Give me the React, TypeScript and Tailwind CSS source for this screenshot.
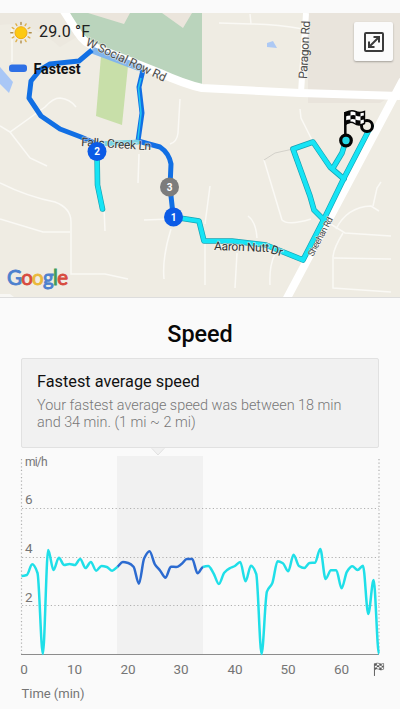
import React from 'react';

const X0 = 21.5;
const STEP = 5.335;
const SPEED_Y = [
  576, 575, 564.3, 573, 654, 550, 570, 557.7, 565, 564, 565, 559, 568, 562, 570.7, 566, 567, 570.7, 566.7,
  562, 563, 566.7, 583.7, 558.3, 551.3, 564.3, 570.7, 577.7, 566.7, 567, 564, 559, 559, 573.3, 567, 566,
  573.3, 584, 572.7, 568.3, 566, 562, 581.3, 565.7, 574, 654, 591.7, 583.3, 561.3, 563.3, 571.3, 554.7,
  566, 568, 563, 562.7, 549, 579, 570.3, 570.3, 588.3, 571.7, 566.3, 570, 565.7, 614, 580, 654,
];

function tangent(i: number): number {
  if (i === 0 || i === SPEED_Y.length - 1) return 0;
  const a = SPEED_Y[i] - SPEED_Y[i - 1];
  const b = SPEED_Y[i + 1] - SPEED_Y[i];
  if (a * b <= 0) return 0;
  return (2 * a * b) / (a + b);
}

function curve(from: number, to: number): string {
  let d = `M${X0 + from * STEP} ${SPEED_Y[from]}`;
  for (let i = from; i < to; i++) {
    const x = X0 + i * STEP;
    d += `C${x + STEP / 3} ${SPEED_Y[i] + tangent(i) / 3} ${x + (STEP * 2) / 3} ${SPEED_Y[i + 1] - tangent(i + 1) / 3} ${x + STEP} ${SPEED_Y[i + 1]}`;
  }
  return d;
}

const CYAN_ROUTES = [
  'M97 152L97.5 185L102.500 209',
  'M173 217L199 221L204 241L232 241L266 245L303 260L324 219L344 178L371 126',
  'M324 220L314 210L310 196L293 149L313 142L330 167L344 179',
  'M333 168L342 153L346 140',
];

const MINOR_ROADS = [
  'M12 27L12 62M0 126L10 132L45 107Q53 98 60 98Q70 99 76 107M10 132L30 158L47 166M0 183Q28 197 55 202Q71 208 71 222L71 274L105 274L128 279',
  'M0 219L43 232L70 232M104 207L105 231M139 154L138 183M144 220L170 219M171 229Q162 258 164 279M180 99L178 133Q177 142 170 144',
  'M250 14L251 24L219 23M251 24Q277 24 303 29M300 109L301 118L312 140M264 160L282 220Q288 226 311 219',
  'M210 186L205 224M248 216Q256 222 257 238M205 242L205 285M237 253L235 288M275 254Q269 266 270 285',
  'M324 220L345 233L391 236M336 229Q347 207 371 206L379 211M373 206L377 188L381 182M343 233Q333 249 333 258L333 288L391 292M334 258L391 259',
];

function Flag() {
  return (
    <g>
      <path d="M2 2Q8 -1 12 1T21 1V13Q15 16 11 13T2 14Z" fill="#fff" stroke="#050505" strokeWidth="1.4" />
      <path
        d="M2 2Q5 .5 7 .5V5Q4 5 2 6ZM12 1Q14 2.500 17 2V6Q14 6 12 5ZM7 5Q10 4 12 5V9Q9 8 7 9ZM17 6Q19 5 21 5V9Q19 9 17 10ZM2 10Q4 9 7 9V12.500Q4 13 2 14ZM12 9Q14 10 17 10V14Q14 15 12 13.500Z"
        fill="#050505"
      />
    </g>
  );
}

function Marker({ x, y, label, color }: { x: number; y: number; label: string; color: string }) {
  return (
    <g>
      <circle cx={x} cy={y} r="9.500" fill={color} />
      <text x={x} y={y + 3.500} textAnchor="middle" fontSize="10" fontWeight="700" fill="#fff">
        {label}
      </text>
    </g>
  );
}

function RouteMap() {
  return (
    <svg viewBox="0 13 400 284" className="block h-[284px] w-full" style={{ fontFamily: 'Roboto, sans-serif' }}>
      <rect y="13" width="400" height="284" fill="#efece3" />
      <path d="M0 13H60L80 35L60 47Q30 20 0 25Z" fill="#ece8df" />
      <path d="M308 13H400V90L380 103L308 103Z" fill="#e9e4dc" />
      <path d="M70 13H202V88L190 86L140 65L84 42Z" fill="#bad4bc" />
      <path d="M88 13L124 24L130 13ZM162 13L183 28L192 13Z" fill="#ebe5dc" />
      <path d="M101 56L128 66L122 125L96 116Z" fill="#c8dfa9" />
      <path d="M0 67L13 82L9 93L0 84Z" fill="#a9c7f6" />
      <path d="M267 43L273 41L277 48L267 47Z" fill="#adc9f4" />
      <g fill="none" stroke="#faf9f5" strokeWidth="1.5">
        {MINOR_ROADS.map((d) => (
          <path key={d} d={d} />
        ))}
      </g>
      <path d="M264 160L275 153L293 149" fill="none" stroke="#cbc9c3" strokeWidth=".8" />
      <g fill="none" stroke="#fff">
        <path d="M62 8L78 33Q84 43 97 48L160 73Q184 84 202 88L300 93L400 96" strokeWidth="8" />
        <path d="M306 13L301 93" strokeWidth="6" />
        <path d="M403 80L344 191L286 300" strokeWidth="8" />
      </g>
      <g fill="none" stroke="#16a3b4" strokeWidth="5.6" strokeLinejoin="round" strokeLinecap="round">
        {CYAN_ROUTES.map((d) => (
          <path key={d} d={d} />
        ))}
      </g>
      <g fill="none" stroke="#16e4f5" strokeWidth="4.2" strokeLinejoin="round" strokeLinecap="round">
        {CYAN_ROUTES.map((d) => (
          <path key={d} d={d} />
        ))}
      </g>
      <path d="M92 50L143 69" stroke="#82b5ec" strokeWidth="7" />
      <path
        d="M143 70L139 87L142 113L138 141M97 144L81 137L60 129L41 116L29 98L31 81L40 70L50 64L79 61L92 50M138 141L160 147Q169 153 171 164L170 187L173 214"
        fill="none"
        stroke="#116fe4"
        strokeWidth="5"
        strokeLinejoin="round"
      />
      <path d="M141 78L138.500 88L141 113L138 139" fill="none" stroke="#22c6ef" strokeWidth="1.600" />
      <path d="M97 144L139 142" stroke="#75d3e4" strokeWidth="5" />
      <g fill="#4b4b4b" stroke="#f5f3ec" strokeWidth="1.5" paintOrder="stroke" strokeOpacity=".6">
        <text transform="translate(85 45) rotate(25)" fontSize="12" textLength="87">
          W Social Row Rd
        </text>
        <text transform="translate(307 79) rotate(-87)" fontSize="12" textLength="58">
          Paragon Rd
        </text>
        <text transform="translate(81 146) rotate(3.5)" fontSize="12" textLength="70" fill="#383838">
          Falls Creek Ln
        </text>
        <text transform="translate(214 250) rotate(2)" fontSize="12" textLength="55" fill="#333">
          Aaron Nutt
        </text>
        <text transform="translate(270 253) rotate(17)" fontSize="12" fill="#333">
          Dr
        </text>
        <text transform="translate(313 257) rotate(-62)" fontSize="9" textLength="43">
          Sheehan Rd
        </text>
      </g>
      <Marker x={97} y={151.500} label="2" color="#0c5be6" />
      <Marker x={169.500} y={187} label="3" color="#7c7c7c" />
      <Marker x={173.500} y={217} label="1" color="#0c5be6" />
      <circle cx="367" cy="126" r="5.500" fill="#efece3" stroke="#050505" strokeWidth="3" />
      <path d="M345.300 112V136" stroke="#050505" strokeWidth="2.500" />
      <g transform="translate(343.500 110.500)">
        <Flag />
      </g>
      <circle cx="346" cy="140.500" r="5.300" fill="#23d6e4" stroke="#050505" strokeWidth="3.200" />
      <g strokeWidth="1.4" strokeLinecap="round">
        {[0, 30, 60, 90, 120, 150, 180, 210, 240, 270, 300, 330].map((a) => (
          <path key={a} d="M21 24.500V22.500" transform={`rotate(${a} 21 32.700)`} stroke={a % 90 === 0 ? '#b08e4b' : '#ddb04d'} />
        ))}
      </g>
      <circle cx="21" cy="32.700" r="6" fill="#fdc911" stroke="#efab16" strokeWidth="1" />
      <text x="39" y="37" fontSize="16" textLength="51" fill="#202020">
        29.0 °F
      </text>
      <rect x="9" y="64.500" width="18" height="7.500" rx="3" fill="#2e70e5" />
      <text x="33.500" y="74" fontSize="14" fontWeight="700" textLength="47" lengthAdjust="spacingAndGlyphs" fill="#111">
        Fastest
      </text>
      <text
        x="7"
        y="284.500"
        fontSize="20.500"
        textLength="61"
        strokeWidth=".9"
        style={{ fontFamily: 'Lato, sans-serif' }}
      >
        <tspan fill="#4c80ce" stroke="#4c80ce">G</tspan>
        <tspan fill="#d74b3e" stroke="#d74b3e">o</tspan>
        <tspan fill="#eab93b" stroke="#eab93b">o</tspan>
        <tspan fill="#4c80ce" stroke="#4c80ce">g</tspan>
        <tspan fill="#3f9d58" stroke="#3f9d58">l</tspan>
        <tspan fill="#d74b3e" stroke="#d74b3e">e</tspan>
      </text>
      <path d="M0 294H10L14 297H0Z" fill="#f8f7f4" />
    </svg>
  );
}

function SpeedChart() {
  return (
    <svg viewBox="0 448 400 261" className="block h-[261px] w-full" style={{ fontFamily: 'Roboto, sans-serif' }}>
      <rect x="117" y="456" width="86" height="198" fill="#f1f1f1" />
      <path d="M151 447.500L158 455L165 447.500" fill="#f1f1f1" stroke="#e2e2e2" strokeWidth="1" />
      <path d="M151 447H165V448.500H151Z" fill="#f1f1f1" />
      <g stroke="#b0b0b0" strokeWidth="1.2" strokeDasharray="1.2 2.4">
        <path d="M22 508.500H379M22 557.500H379M22 605.500H379M21.500 459V654M379 459V654" />
      </g>
      <path d="M21 654.500H379" stroke="#8c8c8c" strokeWidth="1" />
      <g fill="none" strokeWidth="2.5" strokeLinecap="butt" strokeLinejoin="round">
        <path d={curve(0, 18)} stroke="#1fdfe8" />
        <path d={curve(34, 67)} stroke="#1fdfe8" />
        <path d={curve(18, 34)} stroke="#2c6bd0" />
      </g>
      <g fill="#757575" fontSize="13.5">
        <text x="25" y="465.500" fontSize="12" textLength="22.500">mi/h</text>
        <text x="25" y="504">6</text>
        <text x="25" y="553">4</text>
        <text x="25" y="602">2</text>
        <text x="24" y="674" textAnchor="middle">0</text>
        <text x="74.500" y="674" textAnchor="middle">10</text>
        <text x="128" y="674" textAnchor="middle">20</text>
        <text x="181" y="674" textAnchor="middle">30</text>
        <text x="235" y="674" textAnchor="middle">40</text>
        <text x="288" y="674" textAnchor="middle">50</text>
        <text x="341.500" y="674" textAnchor="middle">60</text>
        <text x="21.500" y="698" fontSize="13" textLength="63">Time (min)</text>
      </g>
      <g transform="translate(373.500 663) scale(.48)" opacity=".65">
        <path d="M2 1V27" stroke="#050505" strokeWidth="2" />
        <Flag />
      </g>
    </svg>
  );
}

export default function App() {
  return (
    <main className="flex h-[709px] w-[400px] flex-col overflow-hidden bg-[#fafafa] pt-[13px] font-[Roboto,sans-serif]">
      <section className="relative h-[284px] shrink-0">
        <RouteMap />
        <button
          aria-label="Expand map"
          className="absolute top-[9px] right-[7px] flex size-[39px] items-center justify-center rounded-[2px] bg-[#fbfbfb] shadow-[0_1px_2px_rgba(0,0,0,0.3)]"
        >
          <svg viewBox="0 0 20 20" className="size-5" fill="none" stroke="#3b3b3b" strokeWidth="2">
            <rect x="1" y="1" width="18" height="18" rx="1" />
            <path d="M5.500 14.500L14.500 5.500M9.500 5H15V10.500M5 9.500V15H10.500" />
          </svg>
        </button>
      </section>
      <section className="flex h-[151px] shrink-0 flex-col border-t border-[#ddd] px-[21px]">
        <h1 className="h-[60px] pt-[21px] text-center text-[23.4px] leading-[31px] font-medium text-[#080808]">Speed</h1>
        <div className="h-[90px] w-[358px] rounded-[2px] border border-[#e1e1e1] bg-[#f1f1f1] px-[15px] pt-3">
          <h2 className="text-[16.3px] leading-[22px] text-[#111]">Fastest average speed</h2>
          <p className="mt-1 text-[14.4px] leading-[17px] font-light text-[#777]">
            Your fastest average speed was between 18 min
            <br />
            and 34 min. (1 mi ~ 2 mi)
          </p>
        </div>
      </section>
      <section className="h-[261px] shrink-0">
        <SpeedChart />
      </section>
    </main>
  );
}
